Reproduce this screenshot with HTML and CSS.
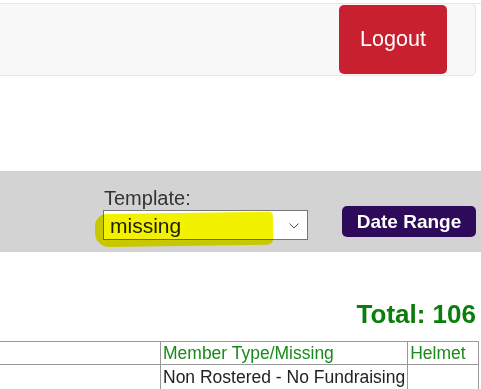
FILE: index.html
```html
<html>
<head>
    <meta charset="utf-8">
    <title>Report</title>
    <link rel="stylesheet" href="styles.css">
</head>
<body>
    <div class="topline"></div>
    <div class="navbar">
        <button class="logout">Logout</button>
    </div>

    <div class="filters">
        <div class="template">
            <label for="tpl">Template:</label>
            <div class="select-wrap">
                <select id="tpl">
                    <option>missing</option>
                </select>
                <svg class="chevron" width="10" height="6" viewBox="0 0 10 6">
                    <path d="M0.5 0.5 L5 5 L9.5 0.5" fill="none" stroke="#555" stroke-width="1"/>
                </svg>
            </div>
            <div class="marker"></div>
        </div>
        <button class="range">Date Range</button>
    </div>

    <div class="total">Total: 106</div>

    <table class="report">
        <tr>
            <th class="c1"></th>
            <th class="c2">Member Type/Missing</th>
            <th class="c3">Helmet</th>
        </tr>
        <tr>
            <td></td>
            <td>Non Rostered - No Fundraising</td>
            <td></td>
        </tr>
    </table>
</body>
</html>
```

FILE: styles.css
```css
* {
    margin: 0;
    padding: 0;
    box-sizing: border-box;
}

body {
    font-family: "Liberation Sans", Arial, sans-serif;
    background: #fff;
    overflow: hidden;
}

.topline {
    height: 4px;
    border-bottom: 1px solid #e6e6e6;
    margin-left: -20px;
}

.navbar {
    height: 73px;
    margin: -1px 5px 0 -20px;
    background: #f8f8f8;
    border: 1px solid #e7e7e7;
    border-radius: 5px;
    display: flex;
    justify-content: flex-end;
    align-items: center;
    padding-right: 28px;
}

.logout {
    width: 108px;
    height: 69px;
    background: #c9202f;
    color: #fff;
    border: none;
    border-radius: 5px;
    font-family: "Liberation Sans", Arial, sans-serif;
    font-size: 21.5px;
}

.filters {
    margin-top: 95px;
    height: 81px;
    background: #d3d3d3;
    display: flex;
    align-items: flex-start;
    padding: 15px 0 0 103px;
}

.template {
    position: relative;
    width: 205px;
}

.template label {
    display: block;
    font-size: 20px;
    color: #333;
    padding-left: 1px;
    line-height: 24px;
}

.select-wrap {
    position: relative;
}

.template select {
    display: block;
    width: 205px;
    height: 30px;
    font-family: "Liberation Sans", Arial, sans-serif;
    font-size: 21px;
    color: #222;
    background: #fff;
    border: 1px solid #767676;
    border-radius: 0;
    padding-left: 6px;
    appearance: none;
    -webkit-appearance: none;
}

.chevron {
    position: absolute;
    right: 9px;
    top: 13px;
}

.marker {
    position: absolute;
    left: -8px;
    top: 27px;
    width: 178px;
    height: 33px;
    background: #f2f200;
    mix-blend-mode: multiply;
    border-radius: 12px 4px 6px 14px;
    transform: rotate(-0.8deg);
}

.range {
    margin: 20px 0 0 34px;
    width: 134px;
    height: 31px;
    background: #2e0a5a;
    color: #fff;
    border: none;
    border-radius: 5px;
    font-family: "Liberation Sans", Arial, sans-serif;
    font-weight: bold;
    font-size: 19px;
}

.total {
    margin: 47px 5px 0 0;
    text-align: right;
    color: #0b7d0b;
    font-weight: bold;
    font-size: 26px;
    line-height: 30px;
}

.report {
    margin: 12px 0 0 -100px;
    width: 579px;
    border-collapse: collapse;
    font-size: 17.5px;
}

.report th,
.report td {
    border: 1px solid #999;
    text-align: left;
    font-weight: normal;
    padding: 0 2px;
    height: 23px;
    color: #222;
    white-space: nowrap;
}

.report th {
    color: #1a8a1a;
}

.report .c1 {
    width: 260px;
}

.report .c2 {
    width: 246px;
}

.report td {
    height: 26px;
}
```
